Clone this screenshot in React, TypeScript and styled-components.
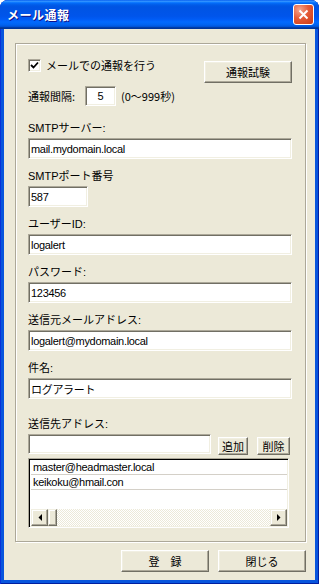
import * as React from "react"
import styled, { createGlobalStyle } from "styled-components"

const GlobalStyle = createGlobalStyle`
  html, body {
    margin: 0;
    padding: 0;
    background: #ffffff;
  }
  body {
    font-family: "Liberation Sans", "Noto Sans CJK JP", sans-serif;
    font-size: 11px;
    color: #000000;
  }
`

const Window = styled.div`
  width: 319px;
  height: 584px;
  box-sizing: border-box;
  display: flex;
  flex-direction: column;
  background: #0855dd;
  border-radius: 8px 8px 0 0;
  overflow: hidden;
  box-shadow: inset 1px 0 #0831d9, inset -1px 0 #001ea0, inset 0 -1px #001ea0;
`

const TitleBar = styled.div`
  height: 29px;
  flex: none;
  display: flex;
  align-items: center;
  justify-content: space-between;
  padding: 0 5px 0 7px;
  background: linear-gradient(180deg,
    #0058ee 0%, #3593ff 4%, #288eff 6%, #127dff 8%, #036ffc 10%,
    #0262ee 14%, #0057e5 20%, #0054e3 24%, #0055eb 56%, #005bf5 66%,
    #026afe 76%, #0062ef 86%, #0052d6 92%, #0040ab 94%, #003092 100%);
`

const Title = styled.span`
  color: #ffffff;
  font-family: "Noto Sans CJK JP", sans-serif;
  font-weight: 700;
  font-size: 12px;
  letter-spacing: 0.5px;
  text-shadow: 1px 1px #0f1089;
`

const CloseButton = styled.div`
  width: 21px;
  height: 21px;
  box-sizing: border-box;
  border: 1px solid #ffffff;
  border-radius: 3px;
  background: radial-gradient(circle at 30% 25%, #f4a58e 0%, #e45b38 45%, #cc3a14 100%);
  display: flex;
  align-items: center;
  justify-content: center;
`

const Body = styled.div`
  flex: 1;
  margin: 0 4px 4px;
  background: #ece9d8;
  display: flex;
  flex-direction: column;
  padding: 14px 9px 8px 11px;
`

const GroupBox = styled.div`
  flex: 1;
  border: 1px solid #aca899;
  box-shadow: inset 1px 1px #ffffff, 1px 1px #ffffff;
  padding: 13px 13px 12px 12px;
  display: flex;
  flex-direction: column;
`

const TopRow = styled.div`
  display: flex;
  justify-content: space-between;
  align-items: flex-start;
`

const CheckLabel = styled.label`
  display: flex;
  align-items: center;
  gap: 5px;
  height: 14px;
  margin-top: 1px;
  font-family: "Noto Sans CJK JP", sans-serif;
`

const CheckBox = styled.span`
  width: 13px;
  height: 13px;
  box-sizing: border-box;
  background: #ffffff;
  border: 1px solid;
  border-color: #aca899 #ffffff #ffffff #aca899;
  box-shadow: inset 1px 1px #716f64, inset -1px -1px #f1efe2;
  display: flex;
  align-items: center;
  justify-content: center;
`

const Button = styled.button<{ $w: number; $h?: number }>`
  width: ${p => p.$w}px;
  height: ${p => p.$h ?? 22}px;
  box-sizing: border-box;
  padding: 0;
  background: #ece9d8;
  border: 1px solid;
  border-color: #ffffff #716f64 #716f64 #ffffff;
  box-shadow: inset -1px -1px #aca899, inset 1px 1px #f1efe2;
  font-family: "Noto Sans CJK JP", sans-serif;
  font-size: 11px;
  color: #000000;
  display: flex;
  align-items: center;
  justify-content: center;
`

const TestButton = styled(Button)`
  margin-top: 4px;
`

const IntervalRow = styled.div`
  display: flex;
  align-items: center;
  margin-top: 3px;
`

const IntervalLabel = styled.span`
  width: 57px;
  font-family: "Noto Sans CJK JP", sans-serif;
`

const Hint = styled.span`
  margin-left: 5px;
  font-family: "Noto Sans CJK JP", sans-serif;
`

const Field = styled.div<{ $gap: number }>`
  display: flex;
  flex-direction: column;
  align-items: flex-start;
  margin-top: ${p => p.$gap}px;
`

const Label = styled.span`
  height: 13px;
  line-height: 13px;
  margin-bottom: 3px;
`

const TextBox = styled.input<{ $w?: number; $h?: number; $center?: boolean }>`
  width: ${p => (p.$w ? `${p.$w}px` : "100%")};
  height: ${p => p.$h ?? 21}px;
  box-sizing: border-box;
  margin: 0;
  padding: 0 2px;
  background: #ffffff;
  border: 1px solid;
  border-color: #aca899 #ffffff #ffffff #aca899;
  box-shadow: inset 1px 1px #716f64, inset -1px -1px #f1efe2;
  font-family: "Liberation Sans", "Noto Sans CJK JP", sans-serif;
  font-size: 11px;
  letter-spacing: -0.3px;
  color: #000000;
  text-align: ${p => (p.$center ? "center" : "left")};
  outline: none;
`

const DestRow = styled.div`
  display: flex;
  align-items: flex-end;
  width: 100%;
`

const AddButton = styled(Button)`
  margin-left: 7px;
  margin-bottom: -1px;
`

const DelButton = styled(Button)`
  margin-left: 9px;
  margin-bottom: -1px;
`

const ListBox = styled.div`
  margin-top: 4px;
  width: 261px;
  height: 70px;
  box-sizing: border-box;
  background: #ffffff;
  border: 1px solid;
  border-color: #aca899 #ffffff #ffffff #aca899;
  box-shadow: inset 1px 1px #000000, inset -1px -1px #f1efe2;
  padding: 1px 1px 1px 1px;
  display: flex;
  flex-direction: column;
`

const ListItems = styled.div`
  flex: 1;
  padding-left: 1px;
`

const ListItem = styled.div`
  height: 14px;
  line-height: 14px;
  padding-left: 2px;
  border-bottom: 1px solid #d4d0c8;
  letter-spacing: -0.3px;
`

const ScrollBar = styled.div`
  height: 17px;
  display: flex;
  margin-left: 1px;
`

const ScrollButton = styled.div<{ $w: number }>`
  width: ${p => p.$w}px;
  height: 17px;
  box-sizing: border-box;
  background: #ece9d8;
  border: 1px solid;
  border-color: #f1efe2 #716f64 #716f64 #f1efe2;
  box-shadow: inset -1px -1px #aca899, inset 1px 1px #ffffff;
  display: flex;
  align-items: center;
  justify-content: center;
`

const Track = styled.div`
  flex: 1;
  background: repeating-conic-gradient(#ffffff 0 25%, #ece9d8 0 50%) 0 0 / 2px 2px;
`

const Footer = styled.div`
  display: flex;
  justify-content: flex-end;
  gap: 9px;
  margin-top: 8px;
`

const CheckMark = () => (
  <svg width="9" height="9" viewBox="0 0 9 9">
    <path d="M1 4 L3.5 6.5 L8 1.5" stroke="#000" strokeWidth="1.8" fill="none" />
  </svg>
)

const Arrow = ({ dir }: { dir: "left" | "right" }) => (
  <svg width="4" height="7" viewBox="0 0 4 7">
    <polygon points={dir === "left" ? "4,0 4,7 0.5,3.5" : "0,0 0,7 3.5,3.5"} fill="#000" />
  </svg>
)

const fields = [
  { label: "SMTPサーバー:", value: "mail.mydomain.local", gap: 16 },
  { label: "SMTPポート番号", value: "587", gap: 11, width: 60 },
  { label: "ユーザーID:", value: "logalert", gap: 11 },
  { label: "パスワード:", value: "123456", gap: 11 },
  { label: "送信元メールアドレス:", value: "logalert@mydomain.local", gap: 11 },
  { label: "件名:", value: "ログアラート", gap: 11 },
]

const recipients = ["master@headmaster.local", "keikoku@hmail.con"]

export default function App() {
  return <>
    <GlobalStyle />
    <Window>
      <TitleBar>
        <Title>メール通報</Title>
        <CloseButton>
          <svg width="11" height="11" viewBox="0 0 11 11">
            <path d="M1.5 1.5 L9.5 9.5 M9.5 1.5 L1.5 9.5" stroke="#fff" strokeWidth="2" />
          </svg>
        </CloseButton>
      </TitleBar>
      <Body>
        <GroupBox>
          <TopRow>
            <CheckLabel>
              <CheckBox><CheckMark /></CheckBox>
              メールでの通報を行う
            </CheckLabel>
            <TestButton $w={88}>通報試験</TestButton>
          </TopRow>
          <IntervalRow>
            <IntervalLabel>通報間隔:</IntervalLabel>
            <TextBox $w={31} $h={20} $center readOnly value="5" />
            <Hint>(0～999秒)</Hint>
          </IntervalRow>
          { fields.map(f =>
            <Field key={f.label} $gap={f.gap}>
              <Label>{f.label}</Label>
              <TextBox $w={f.width} readOnly value={f.value} />
            </Field>
          )}
          <Field $gap={19}>
            <Label>送信先アドレス:</Label>
            <DestRow>
              <TextBox $w={183} $h={20} readOnly value="" />
              <AddButton $w={30} $h={18}>追加</AddButton>
              <DelButton $w={33} $h={18}>削除</DelButton>
            </DestRow>
            <ListBox>
              <ListItems>
                { recipients.map(r => <ListItem key={r}>{r}</ListItem>) }
              </ListItems>
              <ScrollBar>
                <ScrollButton $w={17}><Arrow dir="left" /></ScrollButton>
                <ScrollButton $w={9} />
                <Track />
                <ScrollButton $w={17}><Arrow dir="right" /></ScrollButton>
              </ScrollBar>
            </ListBox>
          </Field>
        </GroupBox>
        <Footer>
          <Button $w={88}>登　録</Button>
          <Button $w={88}>閉じる</Button>
        </Footer>
      </Body>
    </Window>
  </>
}
